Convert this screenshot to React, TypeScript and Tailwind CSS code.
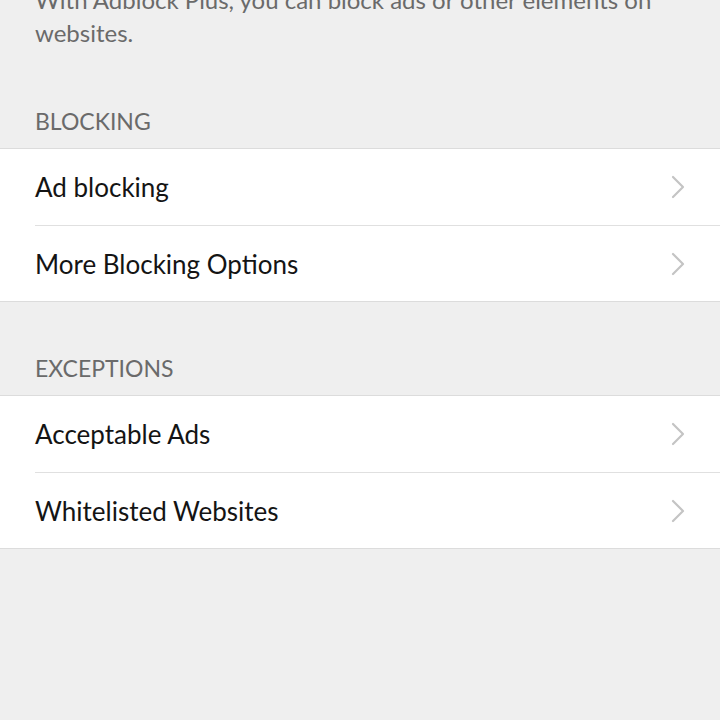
import React from "react";

function Chevron() {
  return (
    <svg width="16" height="26" viewBox="0 0 16 26" fill="none" className="shrink-0">
      <polyline points="3,3 13,13 3,23" stroke="#c4c4c4" strokeWidth="2.2" strokeLinecap="round" strokeLinejoin="round" />
    </svg>
  );
}

function Row({ label, last }: { label: string; last?: boolean }) {
  return (
    <div className={last ? "h-[75px] pl-[35px]" : "h-[77px] pl-[35px]"}>
      <div className={"h-full flex items-center justify-between pr-[34px] " + (last ? "" : "border-b border-[#e0e0e0]")}>
        <span className="text-[26px] text-[#141414] leading-none">{label}</span>
        <Chevron />
      </div>
    </div>
  );
}

function Section({ title, items, pt }: { title: string; items: string[]; pt: string }) {
  return (
    <div>
      <div className={pt + " pb-[10px] px-[35px] text-[23px] leading-[33px] text-[#6a6a6a]"}>{title}</div>
      <div className="bg-white border-t border-b border-[#dcdcdc]">
        {items.map((it, i) => (
          <Row key={it} label={it} last={i === items.length - 1} />
        ))}
      </div>
    </div>
  );
}

export default function App() {
  return (
    <div className="w-[720px] h-[720px] overflow-hidden bg-[#efefef]" style={{ fontFamily: "Lato, 'Noto Sans', sans-serif" }}>
      <p className="mt-[-17px] px-[35px] text-[24px] leading-[33px] text-[#6a6a6a]">
        With Adblock Plus, you can block ads or other elements on websites.
      </p>
      <Section title="BLOCKING" items={["Ad blocking", "More Blocking Options"]} pt="pt-[56px]" />
      <Section title="EXCEPTIONS" items={["Acceptable Ads", "Whitelisted Websites"]} pt="pt-[50px]" />
    </div>
  );
}
